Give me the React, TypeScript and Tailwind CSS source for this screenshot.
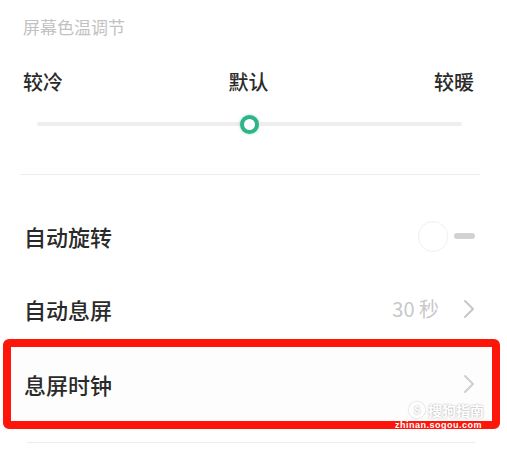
import React from 'react';

const Chevron = ({ color = '#c6c6c6' }: { color?: string }) => (
  <svg width="12" height="20" viewBox="0 0 12 20" fill="none">
    <path d="M2 2 L10 10 L2 18" stroke={color} strokeWidth="2" strokeLinecap="round" strokeLinejoin="round" />
  </svg>
);

const App: React.FC = () => {
  return (
    <div className="w-[507px] h-[454px] bg-white overflow-hidden font-['Noto_Sans_CJK_SC','Noto_Sans',sans-serif] text-[#2a2a2a]">
      {/* Section title */}
      <div className="pt-[16px] pl-[23px] text-[17px] leading-[22px] text-[#c2c2c2]">屏幕色温调节</div>

      {/* Temperature labels */}
      <div className="mt-[30px] flex justify-between pl-[23px] pr-[33px] text-[20px] leading-[28px] font-medium">
        <span>较冷</span>
        <span>默认</span>
        <span>较暖</span>
      </div>

      {/* Slider */}
      <div className="mt-[18px] h-[20px] ml-[37px] mr-[45px] flex items-center">
        <div className="flex-1 h-[4px] bg-[#eeeeee] rounded-l-full"></div>
        <div className="w-[19px] h-[19px] rounded-full border-[4px] border-[#2fb389] bg-white shadow-[0_0_3px_rgba(47,179,137,0.5)]"></div>
        <div className="flex-1 h-[4px] bg-[#eeeeee] rounded-r-full"></div>
      </div>

      <div className="mt-[40px] ml-[20px] mr-[27px] h-px bg-[#ececec]"></div>

      {/* 自动旋转 */}
      <div className="mt-[25px] h-[72px] flex items-center justify-between pl-[24px] pr-[32px]">
        <span className="text-[22px] font-medium">自动旋转</span>
        <div className="flex items-center gap-[6px]">
          <div className="w-[30px] h-[31px] rounded-full border border-[#f0f0f0] bg-white"></div>
          <div className="w-[21px] h-[6px] rounded-full bg-[#d2d2d2]"></div>
        </div>
      </div>

      {/* 自动息屏 */}
      <div className="h-[67px] pt-[7px] flex items-center justify-between pl-[24px] pr-[32px]">
        <span className="text-[22px] font-medium">自动息屏</span>
        <div className="flex items-center gap-[24px]">
          <span className="text-[20px] text-[#c8c8c8]">30 秒</span>
          <Chevron />
        </div>
      </div>

      {/* 息屏时钟 (highlighted) */}
      <div className="relative ml-[3px] mr-[7px] h-[90px] border-[8px] border-[#ff160a] rounded-[6px] flex items-center justify-between pl-[13px] pr-[17px] bg-[#fdfdfd]">
        <span className="text-[22px] font-medium">息屏时钟</span>
        <Chevron color="#cfcfcf" />
        <div className="absolute right-[8px] bottom-[3px] flex items-center gap-[3px] text-white [text-shadow:0_0_2px_rgba(0,0,0,0.35)]">
          <span className="w-[16px] h-[16px] rounded-full border-2 border-white shadow-[0_0_2px_rgba(0,0,0,0.3)] text-[10px] leading-none flex items-center justify-center font-bold">S</span>
          <span className="text-[14px] font-bold leading-none">搜狗指南</span>
        </div>
        <div className="absolute right-[10px] -bottom-[8px] text-[9px] leading-[8px] font-bold text-white tracking-[0.5px] font-['Liberation_Sans',sans-serif]">zhinan.sogou.com</div>
      </div>

      <div className="mt-[13px] ml-[27px] mr-[32px] h-px bg-[#ececec]"></div>
    </div>
  );
};

export default App;
